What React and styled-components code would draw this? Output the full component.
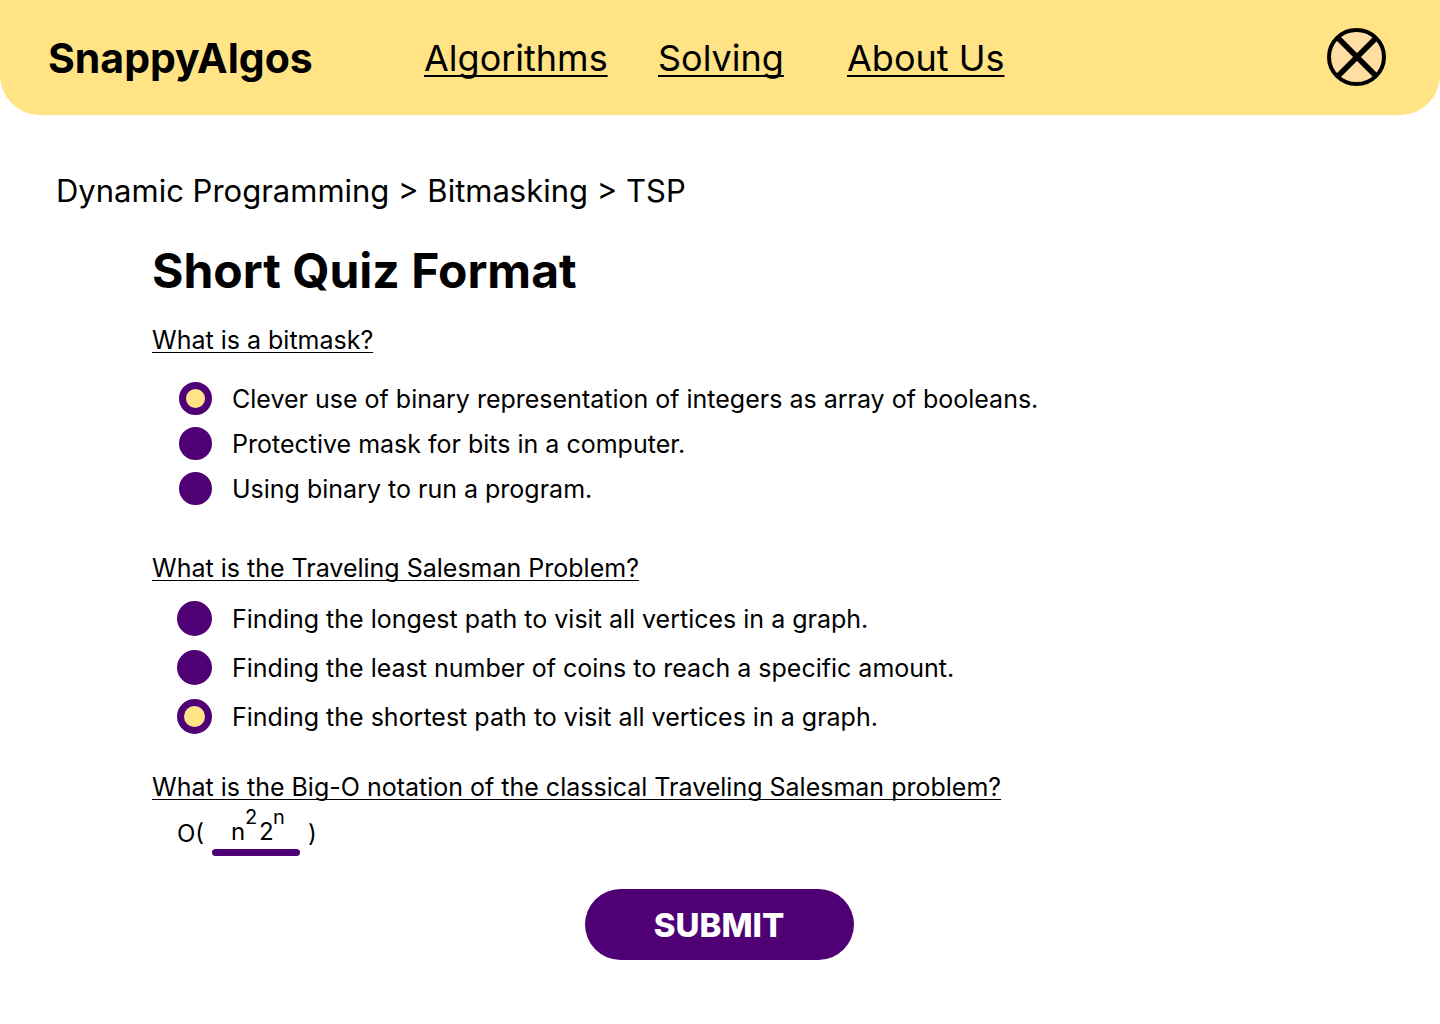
import React, { useState } from "react";
import styled, { createGlobalStyle } from "styled-components";

const purple = "#4f0074";
const yellow = "#ffe385";

const GlobalStyle = createGlobalStyle`
  *, *::before, *::after { box-sizing: border-box; }
  body {
    margin: 0;
    background: #fff;
    color: #000;
    font-family: Inter, "Open Sans", sans-serif;
  }
`;

const Header = styled.header`
  display: flex;
  align-items: center;
  height: 115px;
  padding: 0 54px 0 48px;
  background: ${yellow};
  border-radius: 0 0 40px 40px;
`;

const Logo = styled.a`
  flex: 0 0 376px;
  color: inherit;
  font-size: 41px;
  font-weight: 700;
  line-height: 50px;
  text-decoration: none;
`;

const Nav = styled.nav`
  display: grid;
  grid-template-columns: 234px 189px auto;
`;

const NavLink = styled.a`
  color: inherit;
  font-size: 36px;
  line-height: 46px;
  white-space: nowrap;
  text-decoration: underline 2px;
  text-underline-offset: 4px;
  text-decoration-skip-ink: none;
`;

const CloseButton = styled.button`
  width: 59px;
  height: 59px;
  margin-left: auto;
  padding: 0;
  border: 0;
  background: none;
  cursor: pointer;

  svg { display: block; }
`;

const Main = styled.main`
  padding: 56px 56px 64px;
`;

const Breadcrumbs = styled.nav`
  font-size: 31px;
  line-height: 40px;
`;

const Crumb = styled.a`
  color: inherit;
  text-decoration: none;
`;

const Quiz = styled.form`
  display: flex;
  flex-direction: column;
  padding: 30px 0 0 96px;
`;

const Title = styled.h1`
  margin: 0 0 24px;
  font-size: 48px;
  font-weight: 700;
  line-height: 60px;
`;

const Question = styled.fieldset`
  min-width: 0;
  margin: 0 0 ${(p) => p.$after}px;
  padding: 0;
  border: 0;
  font-size: 25px;
  line-height: 30px;
`;

const Prompt = styled.legend`
  padding: 0;
  text-decoration: underline 1px;
  text-underline-offset: 3px;
  text-decoration-skip-ink: none;
`;

const Options = styled.div`
  display: flex;
  flex-direction: column;
  gap: ${(p) => (p.$large ? 14 : 12)}px;
  padding: ${(p) => (p.$large ? "18px 0 0 25px" : "27px 0 0 27px")};
`;

const Option = styled.label`
  display: flex;
  align-items: center;
  gap: 20px;
  cursor: pointer;
`;

const Radio = styled.input`
  appearance: none;
  flex: none;
  width: ${(p) => (p.$large ? 35 : 33)}px;
  height: ${(p) => (p.$large ? 35 : 33)}px;
  margin: 0;
  border: 7px solid ${purple};
  border-radius: 50%;
  background: ${purple};
  cursor: pointer;

  &:checked { background: ${yellow}; background-clip: padding-box; }
`;

const Answer = styled.div`
  display: flex;
  align-items: flex-end;
  gap: 8px;
  height: 54px;
  padding-left: 25px;
  font-size: 24px;
`;

const Paren = styled.span`
  line-height: 44px;
`;

const Blank = styled.div`
  display: flex;
  flex-direction: column;
  justify-content: space-between;
  width: 88px;
  height: 51px;

  &::after {
    content: "";
    height: 7px;
    border-radius: 4px;
    background: ${purple};
  }
`;

const Terms = styled.div`
  display: flex;
  justify-content: center;
  padding-left: 6px;
`;

const Term = styled.input`
  width: 14px;
  height: 24px;
  margin: ${(p) => (p.$power ? 0 : 14)}px 0 0;
  padding: 0;
  border: 0;
  outline: 0;
  background: none;
  color: inherit;
  font-family: inherit;
  font-size: ${(p) => (p.$power ? 20 : 24)}px;
  line-height: 24px;
`;

const Submit = styled.button`
  align-self: center;
  width: 269px;
  height: 71px;
  margin: 33px 98px 0 0;
  padding: 0;
  border: 0;
  border-radius: 36px;
  background: ${purple};
  color: #fff;
  font-family: inherit;
  font-size: 33px;
  font-weight: 800;
  line-height: 40px;
  cursor: pointer;
`;

const questions = [
  {
    id: "bitmask",
    prompt: "What is a bitmask?",
    selected: 0,
    after: 48,
    options: [
      "Clever use of binary representation of integers as array of booleans.",
      "Protective mask for bits in a computer.",
      "Using binary to run a program.",
    ],
  },
  {
    id: "tsp",
    prompt: "What is the Traveling Salesman Problem?",
    selected: 2,
    after: 38,
    large: true,
    options: [
      "Finding the longest path to visit all vertices in a graph.",
      "Finding the least number of coins to reach a specific amount.",
      "Finding the shortest path to visit all vertices in a graph.",
    ],
  },
];

const terms = [
  { label: "First base", value: "n" },
  { label: "First exponent", value: "2", power: true },
  { label: "Second base", value: "2" },
  { label: "Second exponent", value: "n", power: true },
];

function Choices({ question }) {
  const [selected, setSelected] = useState(question.selected);
  return (
    <Question $after={question.after}>
      <Prompt>{question.prompt}</Prompt>
      <Options $large={question.large}>
        {question.options.map((text, i) => (
          <Option key={text}>
            <Radio
              type="radio"
              name={question.id}
              $large={question.large}
              checked={selected === i}
              onChange={() => setSelected(i)}
            />
            {text}
          </Option>
        ))}
      </Options>
    </Question>
  );
}

export default function App() {
  return (
    <>
      <GlobalStyle />
      <Header>
        <Logo href="#">SnappyAlgos</Logo>
        <Nav>
          <NavLink href="#algorithms">Algorithms</NavLink>
          <NavLink href="#solving">Solving</NavLink>
          <NavLink href="#about">About Us</NavLink>
        </Nav>
        <CloseButton type="button" aria-label="Close">
          <svg width="59" height="59" viewBox="0 0 59 59" fill="none" stroke="#000" strokeWidth="4">
            <ellipse cx="29.5" cy="29" rx="27.5" ry="27" fill="#ffdda3" />
            <path d="M11 10L49 48M49 10L11 48" strokeWidth="5.5" />
          </svg>
        </CloseButton>
      </Header>
      <Main>
        <Breadcrumbs aria-label="Breadcrumb">
          <Crumb href="#dp">Dynamic Programming</Crumb> &gt; <Crumb href="#bitmasking">Bitmasking</Crumb> &gt;{" "}
          <Crumb href="#tsp">TSP</Crumb>
        </Breadcrumbs>
        <Quiz onSubmit={(e) => e.preventDefault()}>
          <Title>Short Quiz Format</Title>
          {questions.map((q) => (
            <Choices key={q.id} question={q} />
          ))}
          <Question $after={0}>
            <Prompt>What is the Big-O notation of the classical Traveling Salesman problem?</Prompt>
            <Answer>
              <Paren>O(</Paren>
              <Blank>
                <Terms>
                  {terms.map((t) => (
                    <Term key={t.label} aria-label={t.label} defaultValue={t.value} $power={t.power} />
                  ))}
                </Terms>
              </Blank>
              <Paren>)</Paren>
            </Answer>
          </Question>
          <Submit type="submit">SUBMIT</Submit>
        </Quiz>
      </Main>
    </>
  );
}
